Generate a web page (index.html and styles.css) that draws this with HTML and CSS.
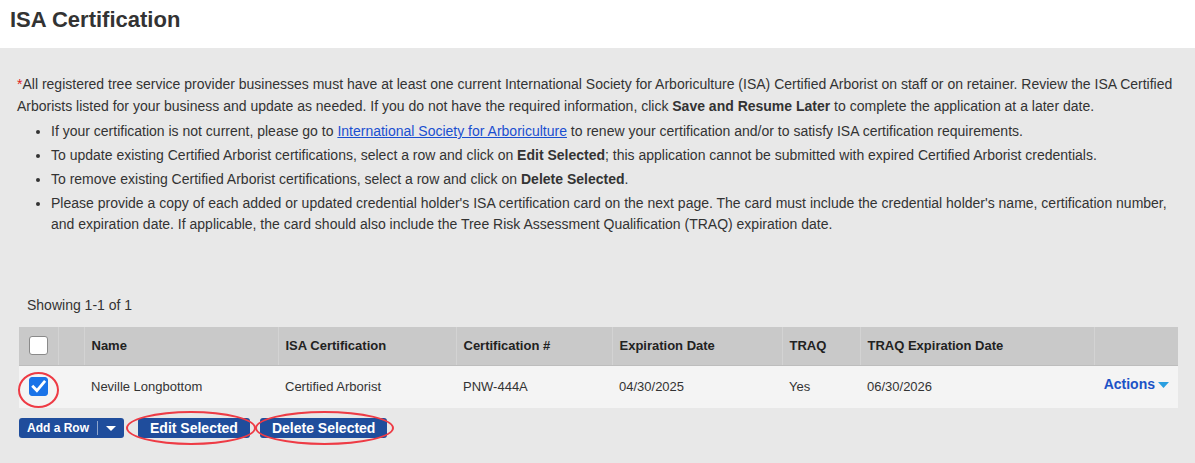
FILE: index.html
```html
<!DOCTYPE html>
<html lang="en">
<head>
<meta charset="utf-8">
<title>ISA Certification</title>
<link rel="stylesheet" href="styles.css">
</head>
<body>
<header class="page-header">
  <h1 class="page-title">ISA Certification</h1>
</header>
<main class="panel">
  <p class="intro"><span class="req">*</span>All registered tree service provider businesses must have at least one current International Society for Arboriculture (ISA) Certified Arborist on staff or on retainer. Review the ISA Certified Arborists listed for your business and update as needed. If you do not have the required information, click <b>Save and Resume Later</b> to complete the application at a later date.</p>
  <ul class="notes">
    <li>If your certification is not current, please go to <a href="#" class="link">International Society for Arboriculture</a> to renew your certification and/or to satisfy ISA certification requirements.</li>
    <li>To update existing Certified Arborist certifications, select a row and click on <b>Edit Selected</b>; this application cannot be submitted with expired Certified Arborist credentials.</li>
    <li>To remove existing Certified Arborist certifications, select a row and click on <b>Delete Selected</b>.</li>
    <li>Please provide a copy of each added or updated credential holder's ISA certification card on the next page. The card must include the credential holder's name, certification number, and expiration date. If applicable, the card should also include the Tree Risk Assessment Qualification (TRAQ) expiration date.</li>
  </ul>

  <div class="showing">Showing 1-1 of 1</div>

  <table class="grid">
    <colgroup>
      <col class="c-check"><col class="c-gap"><col class="c-name"><col class="c-isa"><col class="c-num"><col class="c-exp"><col class="c-traq"><col class="c-traqexp"><col class="c-actions">
    </colgroup>
    <thead>
      <tr>
        <th class="cell-check"><span class="box"></span></th>
        <th></th>
        <th>Name</th>
        <th>ISA Certification</th>
        <th>Certification #</th>
        <th>Expiration Date</th>
        <th>TRAQ</th>
        <th>TRAQ Expiration Date</th>
        <th></th>
      </tr>
    </thead>
    <tbody>
      <tr>
        <td class="cell-check"><span class="annot annot-check"><span class="box box-on"><svg viewBox="0 0 19 19" width="19" height="19"><path d="M4.2 9.8 L7.9 13.6 L15.2 5" fill="none" stroke="#fff" stroke-width="2.8" stroke-linecap="square"/></svg></span></span></td>
        <td></td>
        <td>Neville Longbottom</td>
        <td>Certified Arborist</td>
        <td>PNW-444A</td>
        <td>04/30/2025</td>
        <td>Yes</td>
        <td>06/30/2026</td>
        <td class="cell-actions"><a href="#" class="actions">Actions<svg class="caret" viewBox="0 0 11 6" width="11" height="6"><path d="M0 0 H11 L5.5 6 Z" fill="#2a9fe0"/></svg></a></td>
      </tr>
    </tbody>
  </table>

  <div class="toolbar">
    <div class="btn-split">
      <span class="split-main">Add a Row</span>
      <span class="split-sep"></span>
      <span class="split-caret"><svg viewBox="0 0 10 5" width="10" height="5"><path d="M0 0 H10 L5 5 Z" fill="#fff"/></svg></span>
    </div>
    <span class="annot annot-edit"><button class="btn">Edit Selected</button></span>
    <span class="annot annot-delete"><button class="btn">Delete Selected</button></span>
  </div>
</main>
</body>
</html>
```
FILE: styles.css
```css
* { box-sizing: border-box; }
html, body { margin: 0; padding: 0; }
body {
  width: 1195px;
  height: 463px;
  overflow: hidden;
  background: #e8e8e8;
  font-family: "Liberation Sans", Arial, sans-serif;
  color: #333;
}
.page-header {
  background: #fff;
  height: 48px;
  padding: 0 10px;
}
.page-title {
  margin: 0;
  font-size: 22px;
  line-height: 40px;
  font-weight: bold;
  color: #333;
}
.panel {
  padding: 25px 17px 0 17px;
}
.intro {
  margin: 0;
  font-size: 14px;
  line-height: 22px;
}
.req { color: #e02020; }
.notes {
  margin: 4px 0 0 0;
  padding-left: 34px;
  font-size: 14px;
  line-height: 21px;
}
.notes li { margin-bottom: 3px; }
.notes li:last-child { margin-bottom: 0; }
.link { color: #1a4fd0; text-decoration: underline; }
.showing {
  margin: 60px 0 0 10px;
  font-size: 14px;
  line-height: 20px;
}
.grid {
  margin: 12px 0 0 2px;
  width: 1159px;
  border-collapse: collapse;
  table-layout: fixed;
  font-size: 13px;
}
.c-check { width: 39px; }
.c-gap { width: 26px; }
.c-name { width: 194px; }
.c-isa { width: 178px; }
.c-num { width: 156px; }
.c-exp { width: 170px; }
.c-traq { width: 78px; }
.c-traqexp { width: 234px; }
.c-actions { width: 84px; }
.grid th {
  background: #c9c9c9;
  height: 38px;
  padding: 0 7px;
  text-align: left;
  font-weight: bold;
  color: #222;
  border-left: 1px solid #d3d3d3;
  border-bottom: 1px solid #bdbdbd;
}
.grid th:first-child { border-left: none; }
.grid td {
  background: #f4f4f4;
  height: 43px;
  padding: 0 7px;
  color: #333;
}
.grid .cell-check { padding: 0; text-align: center; }
.box {
  display: inline-block;
  width: 19px;
  height: 19px;
  border: 1px solid #8a8a8a;
  border-radius: 3px;
  background: #fff;
  vertical-align: middle;
}
.box-on {
  background: #1a73e8;
  border-color: #1a73e8;
  position: relative;
}
.box-on svg { position: absolute; left: -1px; top: -1px; }
.cell-actions { text-align: right; }
.actions {
  color: #1b52c6;
  font-weight: bold;
  font-size: 14px;
  text-decoration: none;
  position: relative;
  top: -3px;
  margin-right: 2px;
}
.caret { margin-left: 3px; vertical-align: middle; }
.toolbar {
  display: flex;
  align-items: center;
  margin: 10px 0 0 2px;
}
.btn-split {
  display: flex;
  align-items: center;
  height: 20px;
  width: 105px;
  background: #1f4d9c;
  border-radius: 3px;
  color: #fff;
  font-weight: bold;
  font-size: 12px;
}
.split-main { padding-left: 8px; width: 78px; }
.split-sep { width: 1px; height: 14px; background: #8ea5cc; }
.split-caret { flex: 1; display: flex; justify-content: center; padding-top: 1px; }
.split-caret svg { display: block; }
.btn {
  height: 20px;
  padding: 0 12px;
  border: none;
  border-radius: 3px;
  background: #1f4d9c;
  color: #fff;
  font-family: "Liberation Sans", Arial, sans-serif;
  font-weight: bold;
  font-size: 14px;
  line-height: 20px;
  display: block;
}
.annot { position: relative; display: inline-block; }
.annot::after {
  content: "";
  position: absolute;
  border: 2px solid #ee3b45;
  border-radius: 50%;
  pointer-events: none;
}
.annot-check { vertical-align: middle; }
.annot-check::after { left: -11px; right: -11px; top: -5px; bottom: -12px; }
.annot-edit { margin-left: 14px; }
.annot-edit::after { left: -12px; right: -6px; top: -7px; bottom: -7px; }
.annot-delete { margin-left: 10px; }
.annot-delete::after { left: -5px; right: -7px; top: -7px; bottom: -7px; }
```
